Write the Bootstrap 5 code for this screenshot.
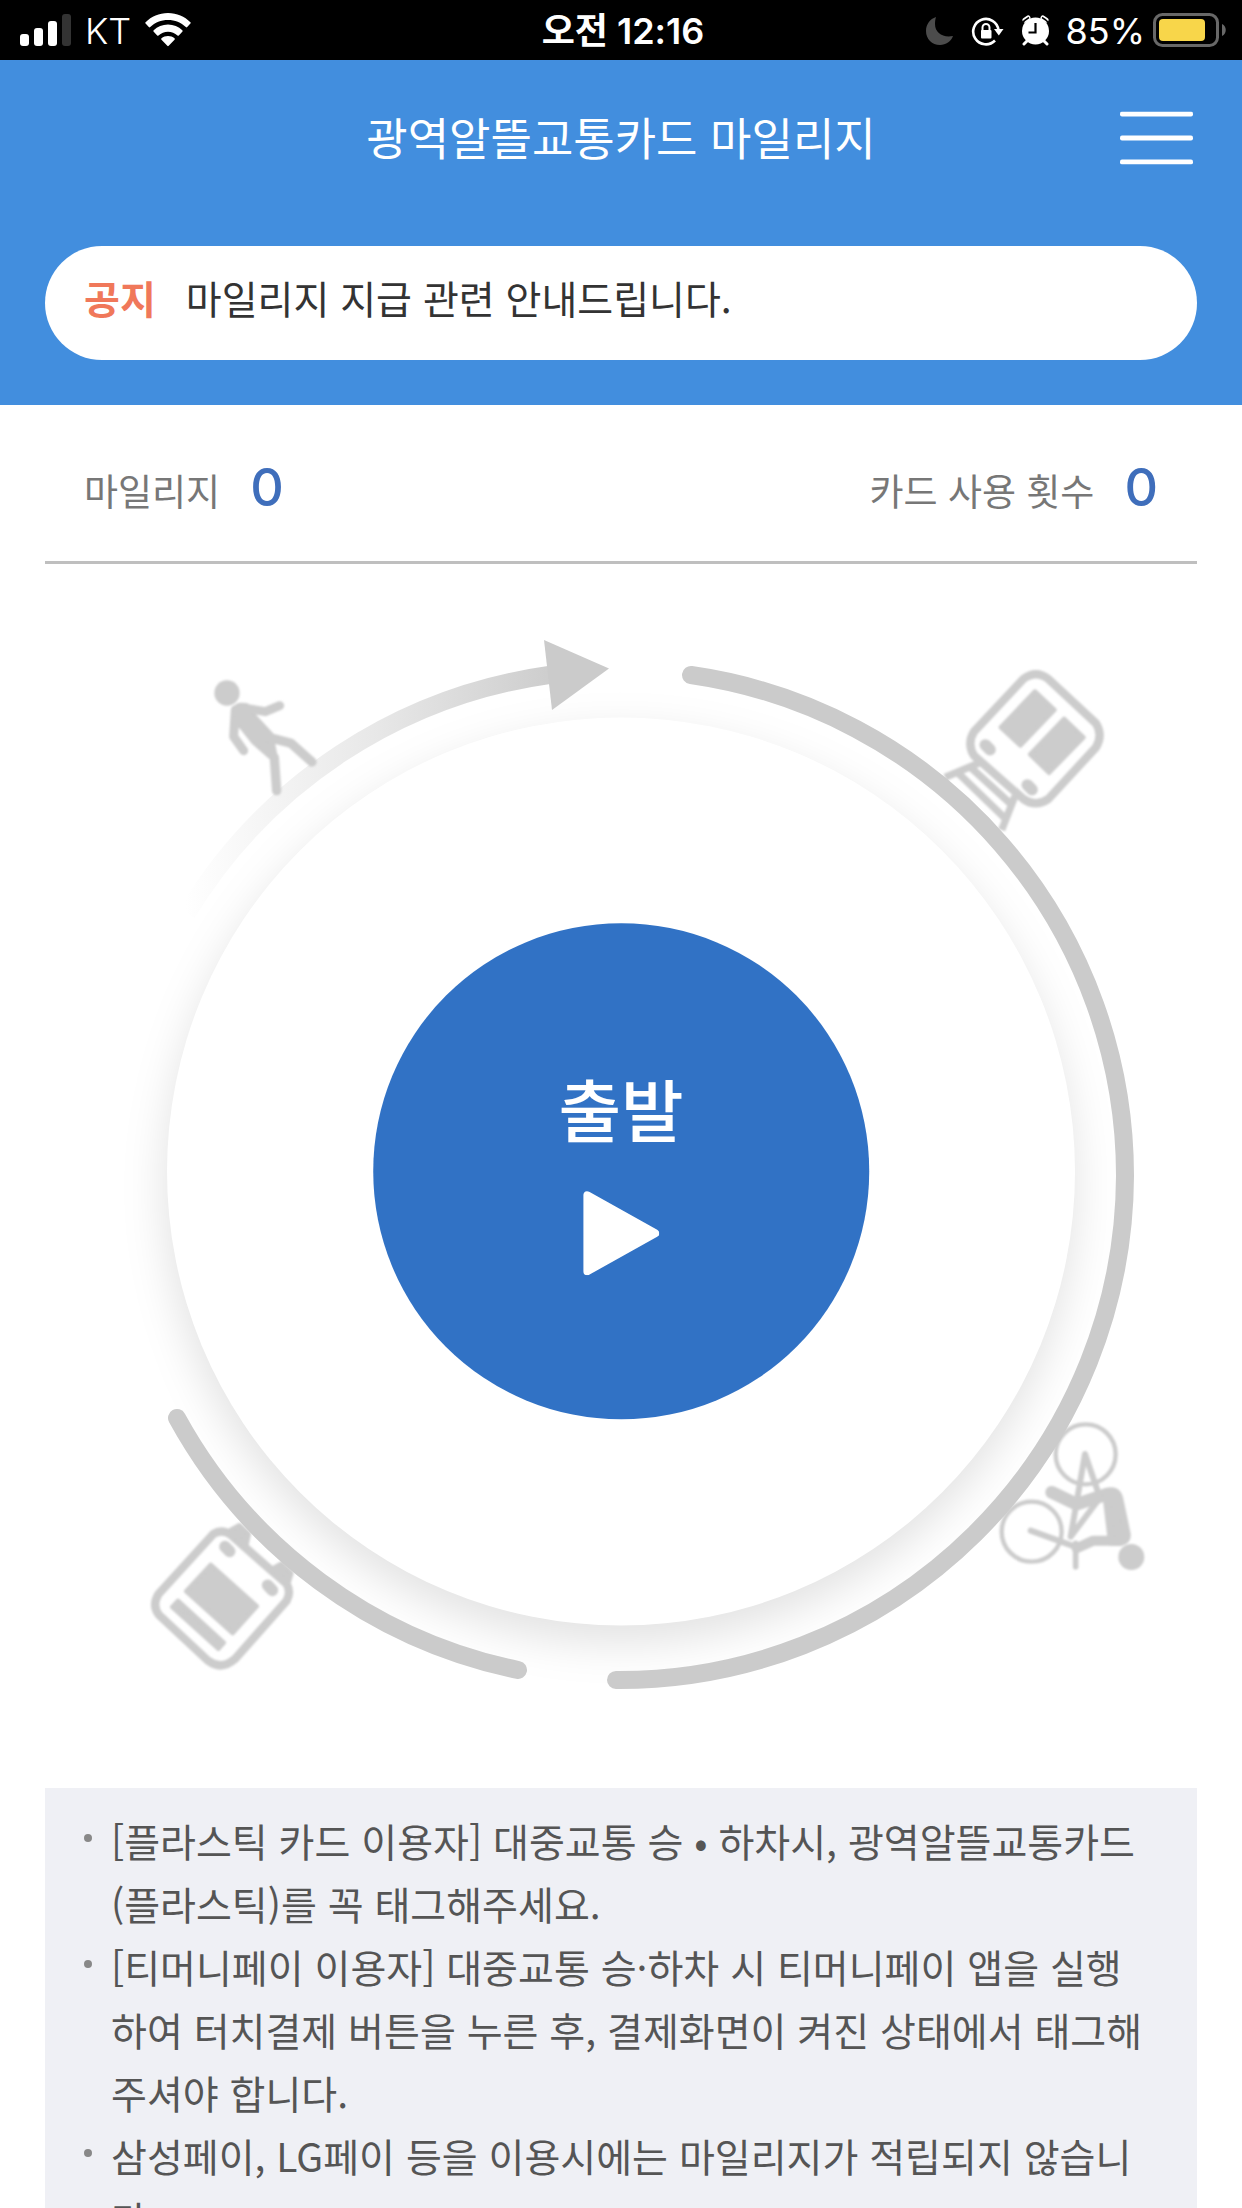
<!DOCTYPE html>
<html lang="ko">
<head>
<meta charset="utf-8">
<meta name="viewport" content="width=device-width, initial-scale=1">
<title>광역알뜰교통카드 마일리지</title>
<link href="https://cdn.jsdelivr.net/npm/bootstrap@5.3.0/dist/css/bootstrap.min.css" rel="stylesheet">
<script src="https://cdn.jsdelivr.net/npm/bootstrap@5.3.0/dist/js/bootstrap.bundle.min.js"></script>
<style>
  body { font-family: "Noto Sans CJK KR", sans-serif; color: #333; background: #fff; }
  .status-bar { height: 60px; padding: 2px 16px 0 20px; background: #000; color: #fff; font-family: Inter, "Noto Sans CJK KR", sans-serif; font-size: 36px; line-height: 58px; }
  .status-side { flex: 1 1 0; }
  .status-side svg { margin-bottom: 2px; }
  .carrier { margin: 0 14px; }
  .app-header { background: #428ede; padding: 0 45px 45px; }
  .title-row { height: 156px; margin-bottom: 30px; }
  .app-title { font-size: 45px; line-height: 66px; padding-bottom: 3px; }
  .menu-btn { right: 0; top: 50%; transform: translateY(-50%); padding: 12px 4px; }
  .notice-pill { height: 114px; padding: 0 39px 12px; font-size: 39px; line-height: 60px; color: #333; gap: 30px; }
  .notice-tag { color: #f0785a; }
  .stats { margin: 0 45px; padding: 10px 39px 0; height: 159px; border-bottom: 3px solid #bfbfbf; }
  .stat-label { font-size: 37px; line-height: 54px; color: #777; }
  .stat-num { font-family: Inter, sans-serif; font-size: 52px; line-height: 66px; font-weight: 500; color: #3f6ebb; }
  .stat-item { gap: 30px; }
  .ring-stage svg { display: block; }
  .start-btn { left: 50%; top: 50%; width: 39.9%; aspect-ratio: 1; transform: translate(-50%, -51%); background: #3172c5; color: #fff; gap: 42px; font-size: 68px; line-height: 82px; }
  .guide { margin: 0 45px; padding: 21px 46px 40px 39px; background: #eff0f5; color: #555; font-size: 39px; line-height: 63px; word-break: break-all; }
  .guide li { position: relative; padding-left: 27px; }
  .guide li::before { content: ""; position: absolute; left: 0; top: 25px; width: 8px; height: 8px; border-radius: 50%; background: #888; }
</style>
</head>
<body class="vh-100 overflow-hidden">

<div class="status-bar d-flex align-items-center">
  <div class="status-side d-flex align-items-center">
    <svg width="51" height="32" viewBox="0 0 51 32" fill="#fff" aria-hidden="true"><rect y="20" width="9" height="12" rx="3"/><rect x="14" y="14" width="9" height="18" rx="3"/><rect x="28" y="7" width="9" height="25" rx="3"/><rect x="42" width="9" height="32" rx="3" fill="#333"/></svg>
    <span class="carrier fw-light">KT</span>
    <svg width="46" height="34" viewBox="0 0 46 34" fill="#fff" aria-hidden="true"><path d="M23 0C14 0 6.500 3.500.600 9.200a1 1 0 0 0 0 1.400l3.200 3.500a1 1 0 0 0 1.400 0C10 9.600 16 7 23 7s13 2.600 17.800 7.100a1 1 0 0 0 1.400 0l3.200-3.500a1 1 0 0 0 0-1.400C39.500 3.500 32 0 23 0z"/><path d="M23 11.500c-5.600 0-10.500 2.200-14.300 5.700a1 1 0 0 0 0 1.500l3.500 3.700a1 1 0 0 0 1.300 0c2.600-2.300 5.900-3.700 9.500-3.700s6.900 1.400 9.500 3.700a1 1 0 0 0 1.300 0l3.500-3.700a1 1 0 0 0 0-1.500c-3.800-3.500-8.700-5.700-14.300-5.700z"/><path d="M23 23c-2.500 0-4.700.9-6.500 2.300a1 1 0 0 0 0 1.500l5.800 6a1 1 0 0 0 1.400 0l5.800-6a1 1 0 0 0 0-1.500C27.700 23.900 25.500 23 23 23z"/></svg>
  </div>
  <div class="fw-semibold">오전 12:16</div>
  <div class="status-side d-flex align-items-center justify-content-end">
    <svg width="124" height="32" viewBox="930 14 124 32" aria-hidden="true">
      <path d="M940 17c-6 2-10 7.500-10 14 0 8 6 14 14 14 6 0 11-3.500 13-9-10 2-18-3-18-12 0-3 .4-5 1-7z" fill="#4c4c4c"/>
      <g fill="none" stroke="#fff" stroke-width="2.600"><path d="M1002.500 30a12.700 12.700 0 1 0-3.500 10.500"/><path d="M986.500 31v-3.500a3.500 3.500 0 0 1 7 0V31" stroke-width="2"/></g>
      <rect x="985" y="30" width="10.500" height="8.500" rx="1" fill="#fff"/><path d="M998 29h9.500l-4.700 6.500z" fill="#fff"/>
      <circle cx="1039.500" cy="31" r="13.500" fill="#fff"/><g stroke="#fff" stroke-width="5" stroke-linecap="round"><path d="m1029 20 3-2m18 2-3-2"/></g><g stroke="#fff" stroke-width="3" stroke-linecap="round"><path d="m1031 41-3 3m20-3 3 3"/></g><path d="M1024 25.500q4-5.500 9-8m22 8q-4-5.500-9-8" stroke="#000" stroke-width="1.500" fill="none"/>
      <path d="M1039.500 23v9.500h-7" fill="none" stroke="#000" stroke-width="2.200"/>
    </svg>
    <span class="ms-3 me-2">85%</span>
    <svg width="73" height="34" viewBox="0 0 73 34" aria-hidden="true"><rect x="1.500" y="1.500" width="63" height="31" rx="8" fill="none" stroke="#686868" stroke-width="3"/><rect x="6" y="6" width="46" height="22" rx="4" fill="#f8d64a"/><path d="M69 11c5 2 5 10 0 12z" fill="#686868"/></svg>
  </div>
</div>

<header class="app-header">
  <div class="title-row position-relative d-flex align-items-center justify-content-center">
    <h1 class="app-title text-white fw-normal m-0">광역알뜰교통카드 마일리지</h1>
    <button type="button" class="menu-btn btn border-0 position-absolute lh-1" aria-label="메뉴">
      <svg width="73" height="53" viewBox="0 0 73 53" fill="#fff" aria-hidden="true"><rect width="73" height="5" rx="2"/><rect y="24" width="73" height="5" rx="2"/><rect y="48" width="73" height="5" rx="2"/></svg>
    </button>
  </div>
  <a href="#notice" class="notice-pill d-flex align-items-center bg-white rounded-pill text-decoration-none">
    <strong class="notice-tag fw-bold">공지</strong><span>마일리지 지급 관련 안내드립니다.</span>
  </a>
</header>

<main>
  <section class="stats d-flex align-items-center justify-content-between">
    <div class="stat-item d-flex align-items-baseline"><span class="stat-label">마일리지</span><span class="stat-num">0</span></div>
    <div class="stat-item d-flex align-items-baseline"><span class="stat-label">카드 사용 횟수</span><span class="stat-num">0</span></div>
  </section>

  <section class="ring-stage position-relative">
    <svg class="w-100 h-auto" viewBox="0 564 1242 1224" aria-hidden="true">
      <defs>
        <filter id="halo" x="-20%" y="-20%" width="140%" height="140%"><feGaussianBlur stdDeviation="21"/></filter>
        <filter id="soft"><feGaussianBlur stdDeviation="2.400"/></filter>
        <linearGradient id="fade" gradientUnits="userSpaceOnUse" x1="185" y1="0" x2="560" y2="0"><stop offset="0" stop-color="#ccc" stop-opacity="0"/><stop offset=".5" stop-color="#ccc" stop-opacity=".45"/><stop offset="1" stop-color="#ccc"/></linearGradient>
      </defs>
      <circle cx="620" cy="1188" r="456" fill="#000" fill-opacity=".11" filter="url(#halo)"/>
      <circle cx="621" cy="1171.500" r="454" fill="#fff"/>

      <!-- walking person -->
      <g transform="translate(160 620) scale(.3333)" fill="#ccc" stroke="#ccc" stroke-linecap="round" stroke-linejoin="round" filter="url(#soft)">
        <circle cx="201" cy="219" r="38" stroke="none"/>
        <path d="M240 262 316 275 359 257" fill="none" stroke-width="27"/>
        <path d="M226 270 221 350 251 392" fill="none" stroke-width="27"/>
        <path d="M220 266q12-18 42-12l24 34 50 54 12 62-22 6-48-42-38-48-22-6z" stroke-width="8"/>
        <path d="M325 352 393 370 456 426M312 378 343 413 350 512" fill="none" stroke-width="28"/>
      </g>

      <!-- train on rails -->
      <g transform="translate(900 640) scale(.3333)" fill="#ccc" stroke="#ccc" stroke-linejoin="round" filter="url(#soft)">
        <path d="M370 117q38-28 75 0L588 250q22 36 0 72L445 477q-38 26-75 0L222 347q-22-36 0-72z" fill="none" stroke-width="25"/>
        <path d="m405 155 58 55-102 106-58-54zM492 237l58 55-103 106-56-55z" stroke-width="14"/>
        <path d="m256 315 14 14m112 106 14 14" stroke-width="35" stroke-linecap="round"/>
        <path d="M240 368 135 412M345 468 305 570M215 385 330 490M170 395 320 540" fill="none" stroke-width="22"/>
      </g>

      <!-- cyclist -->
      <g transform="translate(960 1400) scale(.3333)" fill="none" stroke="#ccc" stroke-linecap="round" stroke-linejoin="round" filter="url(#soft)">
        <circle cx="377" cy="163" r="90" stroke-width="13"/><circle cx="215" cy="395" r="90" stroke-width="13"/>
        <path d="M412 270 375 162 332 410 415 300M212 392 345 440" stroke-width="18"/>
        <path d="M347 430V500" stroke-width="17"/>
        <path d="M275 277 350 313 440 283" stroke-width="38"/>
        <path d="M350 445 400 422H475" stroke-width="30"/>
        <path d="M437 275q35-10 42 22l22 104q3 20-18 26h-28z" fill="#ccc" stroke-width="22"/>
        <circle cx="514" cy="471" r="39" fill="#ccc" stroke="none"/>
      </g>

      <!-- bus -->
      <g transform="translate(120 1380) scale(.3333)" fill="#ccc" stroke="#ccc" stroke-linejoin="round" filter="url(#soft)">
        <path d="M280 462q25-16 52 2L500 612q14 25 0 50L345 837q-40 35-80 6L117 705q-22-28-2-62z" fill="none" stroke-width="25"/>
        <path d="m272 555 138 124-72 80-139-125zM174 663l137 125-16 18-138-125z" stroke-width="14"/>
        <path d="m315 500 14 14m114 102 14 15" stroke-width="35" stroke-linecap="round"/>
        <path d="m332 450 26-14 28 26-8 38zM460 565l24-14 30 28-10 34z" stroke-width="14"/>
      </g>

      <g fill="none" stroke="#cbcbcb" stroke-width="18" stroke-linecap="round">
        <path d="M691 675A506 506 0 0 1 1125 1176 506 506 0 0 1 616 1680"/>
        <path d="M518 1670A506 506 0 0 1 177 1418"/>
        <path d="M187 913A506 506 0 0 1 549 675" stroke="url(#fade)" stroke-linecap="butt"/>
      </g>
      <path d="m544 640 65 28.500-57 41.500z" fill="#cbcbcb"/>
    </svg>
    <button type="button" class="start-btn btn border-0 rounded-circle position-absolute d-flex flex-column align-items-center justify-content-center p-0 fw-medium">
      <span>출발</span>
      <svg width="76" height="84" viewBox="0 0 76 84" fill="#fff" stroke="#fff" stroke-width="8" stroke-linejoin="round" aria-hidden="true"><path d="M4 4v76l68-38z"/></svg>
    </button>
  </section>

  <ul class="guide list-unstyled">
    <li>[플라스틱 카드 이용자] 대중교통 승 • 하차시, 광역알뜰교통카드(플라스틱)를 꼭 태그해주세요.</li>
    <li>[티머니페이 이용자] 대중교통 승·하차 시 티머니페이 앱을 실행하여 터치결제 버튼을 누른 후, 결제화면이 켜진 상태에서 태그해주셔야 합니다.</li>
    <li>삼성페이, LG페이 등을 이용시에는 마일리지가 적립되지 않습니다.</li>
  </ul>
</main>
</body>
</html>
